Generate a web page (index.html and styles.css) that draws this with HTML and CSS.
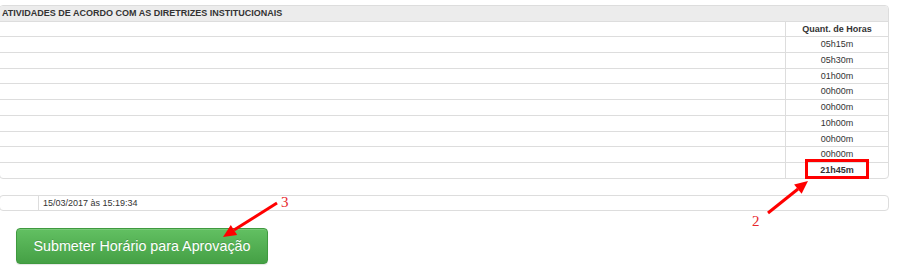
FILE: index.html
```html
<!DOCTYPE html>
<html lang="pt-BR">
<head>
    <meta charset="UTF-8">
    <title>Horário - Atividades</title>
    <link rel="stylesheet" href="styles.css">
</head>
<body>

<div class="page">
    <div class="panel">
        <div class="panel-heading">ATIVIDADES DE ACORDO COM AS DIRETRIZES INSTITUCIONAIS</div>
        <table class="hours">
            <tr class="head-row"><th></th><th class="qty">Quant. de Horas</th></tr>
            <tr><td></td><td class="qty">05h15m</td></tr>
            <tr><td></td><td class="qty">05h30m</td></tr>
            <tr><td></td><td class="qty">01h00m</td></tr>
            <tr><td></td><td class="qty">00h00m</td></tr>
            <tr><td></td><td class="qty">00h00m</td></tr>
            <tr><td></td><td class="qty">10h00m</td></tr>
            <tr><td></td><td class="qty">00h00m</td></tr>
            <tr><td></td><td class="qty">00h00m</td></tr>
            <tr class="total"><td></td><td class="qty">21h45m</td></tr>
        </table>
    </div>

    <div class="panel info">
        <table class="info-table">
            <tr><td class="label"></td><td class="stamp">15/03/2017 às 15:19:34</td></tr>
        </table>
    </div>

    <button class="btn-submit" type="button">Submeter Horário para Aprovação</button>

    <!-- marcações da captura -->
    <div class="highlight"></div>
    <svg class="annotations" width="900" height="266" viewBox="0 0 900 266">
        <line x1="768" y1="213" x2="798" y2="189" stroke="#f00" stroke-width="3"/>
        <polygon points="808,181 801.6,193.8 794.1,184.4" fill="#f00"/>
        <text x="752" y="226" class="mark">2</text>

        <line x1="277" y1="203" x2="234" y2="230" stroke="#f00" stroke-width="3"/>
        <polygon points="223,237 237.2,235.1 230.8,225" fill="#f00"/>
        <text x="281" y="207" class="mark">3</text>
    </svg>
</div>

</body>
</html>
```

FILE: styles.css
```css
body {
    margin: 0;
    background-color: #fff;
    font-family: "Liberation Sans", Arial, sans-serif;
    color: #333;
}

.page {
    position: relative;
    width: 900px;
    height: 266px;
    padding: 5px 11px 0 0;
    box-sizing: border-box;
}

.panel {
    margin-left: -1px;
    border: 1px solid #ddd;
    border-radius: 4px;
    background-color: #fff;
    overflow: hidden;
}

.panel-heading {
    height: 15px;
    line-height: 15px;
    padding-left: 2px;
    background-color: #ececec;
    border-bottom: 1px solid #ddd;
    font-size: 9px;
    font-weight: bold;
}

.hours, .info-table {
    width: 100%;
    border-collapse: collapse;
    font-size: 9px;
}

.hours td, .hours th {
    padding: 0;
    height: 14.78px;
    line-height: 14.78px;
    border-top: 1px solid #ddd;
}

.hours .head-row th {
    height: 14px;
    line-height: 14px;
    border-top: none;
}

.hours .qty {
    width: 102px;
    border-left: 1px solid #ddd;
    text-align: center;
}

.hours .total td {
    font-weight: bold;
}

.info {
    margin-top: 16px;
}

.info-table td {
    padding: 0;
    height: 14px;
    line-height: 14px;
}

.info-table .label {
    width: 38px;
    border-right: 1px solid #ddd;
}

.info-table .stamp {
    padding-left: 4px;
}

.btn-submit {
    display: block;
    margin: 17px 0 0 16px;
    width: 252px;
    height: 36px;
    padding: 0;
    border: 1px solid #3f9a3f;
    border-radius: 4px;
    background-image: linear-gradient(to bottom, #62c062 0, #45a045 100%);
    color: #fff;
    font-family: "Liberation Sans", Arial, sans-serif;
    font-size: 14.3px;
    text-shadow: 0 -1px 0 rgba(0, 0, 0, 0.15);
    box-shadow: inset 0 1px 0 rgba(255, 255, 255, 0.15), 0 1px 1px rgba(0, 0, 0, 0.1);
    cursor: pointer;
}

.highlight {
    position: absolute;
    left: 805px;
    top: 159px;
    width: 58px;
    height: 14px;
    border: 3px solid #f00;
}

.annotations {
    position: absolute;
    left: 0;
    top: 0;
    pointer-events: none;
}

.mark {
    font-family: "Liberation Serif", "Times New Roman", serif;
    font-size: 15px;
    fill: #e8262a;
}
```
